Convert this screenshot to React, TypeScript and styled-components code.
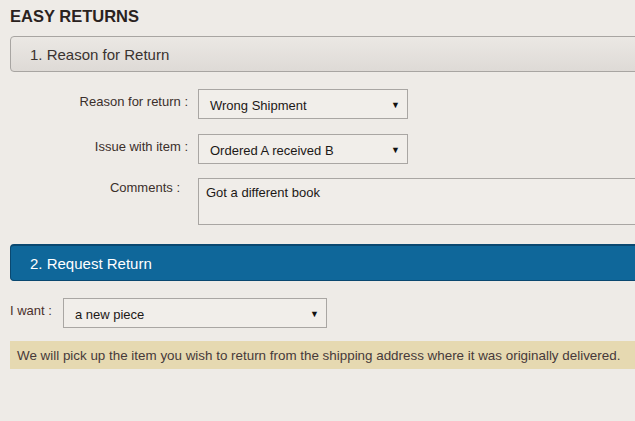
import React from "react";
import styled, { createGlobalStyle } from "styled-components";

const Global = createGlobalStyle`
  html, body { margin: 0; padding: 0; background: #eeebe7; }
  body { font-family: "Liberation Sans", Arial, sans-serif; }
`;

const Page = styled.div`
  width: 635px;
  height: 421px;
  overflow: hidden;
  background: #eeebe7;
  padding-left: 10px;
  box-sizing: border-box;
`;

const Title = styled.h1`
  margin: 0;
  padding-top: 7px;
  height: 36px;
  box-sizing: border-box;
  font-size: 16.5px;
  font-weight: bold;
  color: #2a221e;
`;

const SectionBar = styled.div<{ $active?: boolean }>`
  height: ${(p) => (p.$active ? 37 : 36)}px;
  width: 640px;
  box-sizing: border-box;
  display: flex;
  align-items: center;
  padding-left: 19px;
  font-size: 15px;
  border-radius: 4px 0 0 4px;
  ${(p) =>
    p.$active
      ? `
    background: #0f679a;
    color: #ffffff;
    border: 1px solid #0a4870;
    border-top: 2px solid #0a4870;
  `
      : `
    background: linear-gradient(#ebe8e4, #dedad6);
    color: #3a3330;
    border: 1px solid #a8a5a2;
  `}
`;

const Form = styled.div`
  display: flex;
  flex-direction: column;
  gap: 15px;
  padding-top: 17px;
`;

const Row = styled.div<{ $labelWidth: number; $offset?: number }>`
  display: grid;
  grid-template-columns: ${(p) => p.$labelWidth}px 1fr;
  column-gap: 10px;
  align-items: start;
  margin-top: ${(p) => p.$offset || 0}px;
`;

const Label = styled.div<{ $top?: number; $right?: number }>`
  text-align: right;
  font-size: 13px;
  color: #3b2f2b;
  padding-top: ${(p) => (p.$top ?? 5)}px;
  padding-right: ${(p) => p.$right || 0}px;
`;

const Select = styled.div<{ $width: number }>`
  width: ${(p) => p.$width}px;
  height: 30px;
  box-sizing: border-box;
  border: 1px solid #a9a6a3;
  background: #f1eeea;
  display: flex;
  align-items: center;
  justify-content: space-between;
  padding: 2px 7px 0 11px;
  font-size: 13px;
  color: #1c1816;
`;

const Arrow = styled.span`
  font-size: 9px;
  color: #111;
`;

const TextArea = styled.div`
  width: 460px;
  height: 47px;
  box-sizing: border-box;
  border: 1px solid #a9a6a3;
  background: #f0ede9;
  padding: 6px 7px;
  font-size: 13px;
  color: #1c1816;
`;

const Section2 = styled.div`
  margin-top: 19px;
`;

const WantRow = styled.div`
  display: flex;
  align-items: flex-start;
  gap: 11px;
  padding-top: 17px;
`;

const WantLabel = styled.div`
  font-size: 13px;
  color: #4a2f2b;
  padding-top: 5px;
`;

const Notice = styled.div`
  margin-top: 13px;
  height: 28px;
  width: 640px;
  box-sizing: border-box;
  background: #e6d9b1;
  display: flex;
  align-items: center;
  padding-left: 7px;
  font-size: 13.4px;
  color: #46393a;
  white-space: nowrap;
`;

export default function App() {
  return (
    <Page>
      <Global />
      <Title>EASY RETURNS</Title>
      <SectionBar>1. Reason for Return</SectionBar>
      <Form>
        <Row $labelWidth={178}>
          <Label>Reason for return :</Label>
          <Select $width={210}>
            <span>Wrong Shipment</span>
            <Arrow>▼</Arrow>
          </Select>
        </Row>
        <Row $labelWidth={178}>
          <Label>Issue with item :</Label>
          <Select $width={210}>
            <span>Ordered A received B</span>
            <Arrow>▼</Arrow>
          </Select>
        </Row>
        <Row $labelWidth={178} $offset={-1}>
          <Label $top={2} $right={8}>Comments :</Label>
          <TextArea>Got a different book</TextArea>
        </Row>
      </Form>
      <Section2>
        <SectionBar $active>2. Request Return</SectionBar>
        <WantRow>
          <WantLabel>I want :</WantLabel>
          <Select $width={264}>
            <span>a new piece</span>
            <Arrow>▼</Arrow>
          </Select>
        </WantRow>
        <Notice>
          We will pick up the item you wish to return from the shipping address where it was originally delivered.
        </Notice>
      </Section2>
    </Page>
  );
}
